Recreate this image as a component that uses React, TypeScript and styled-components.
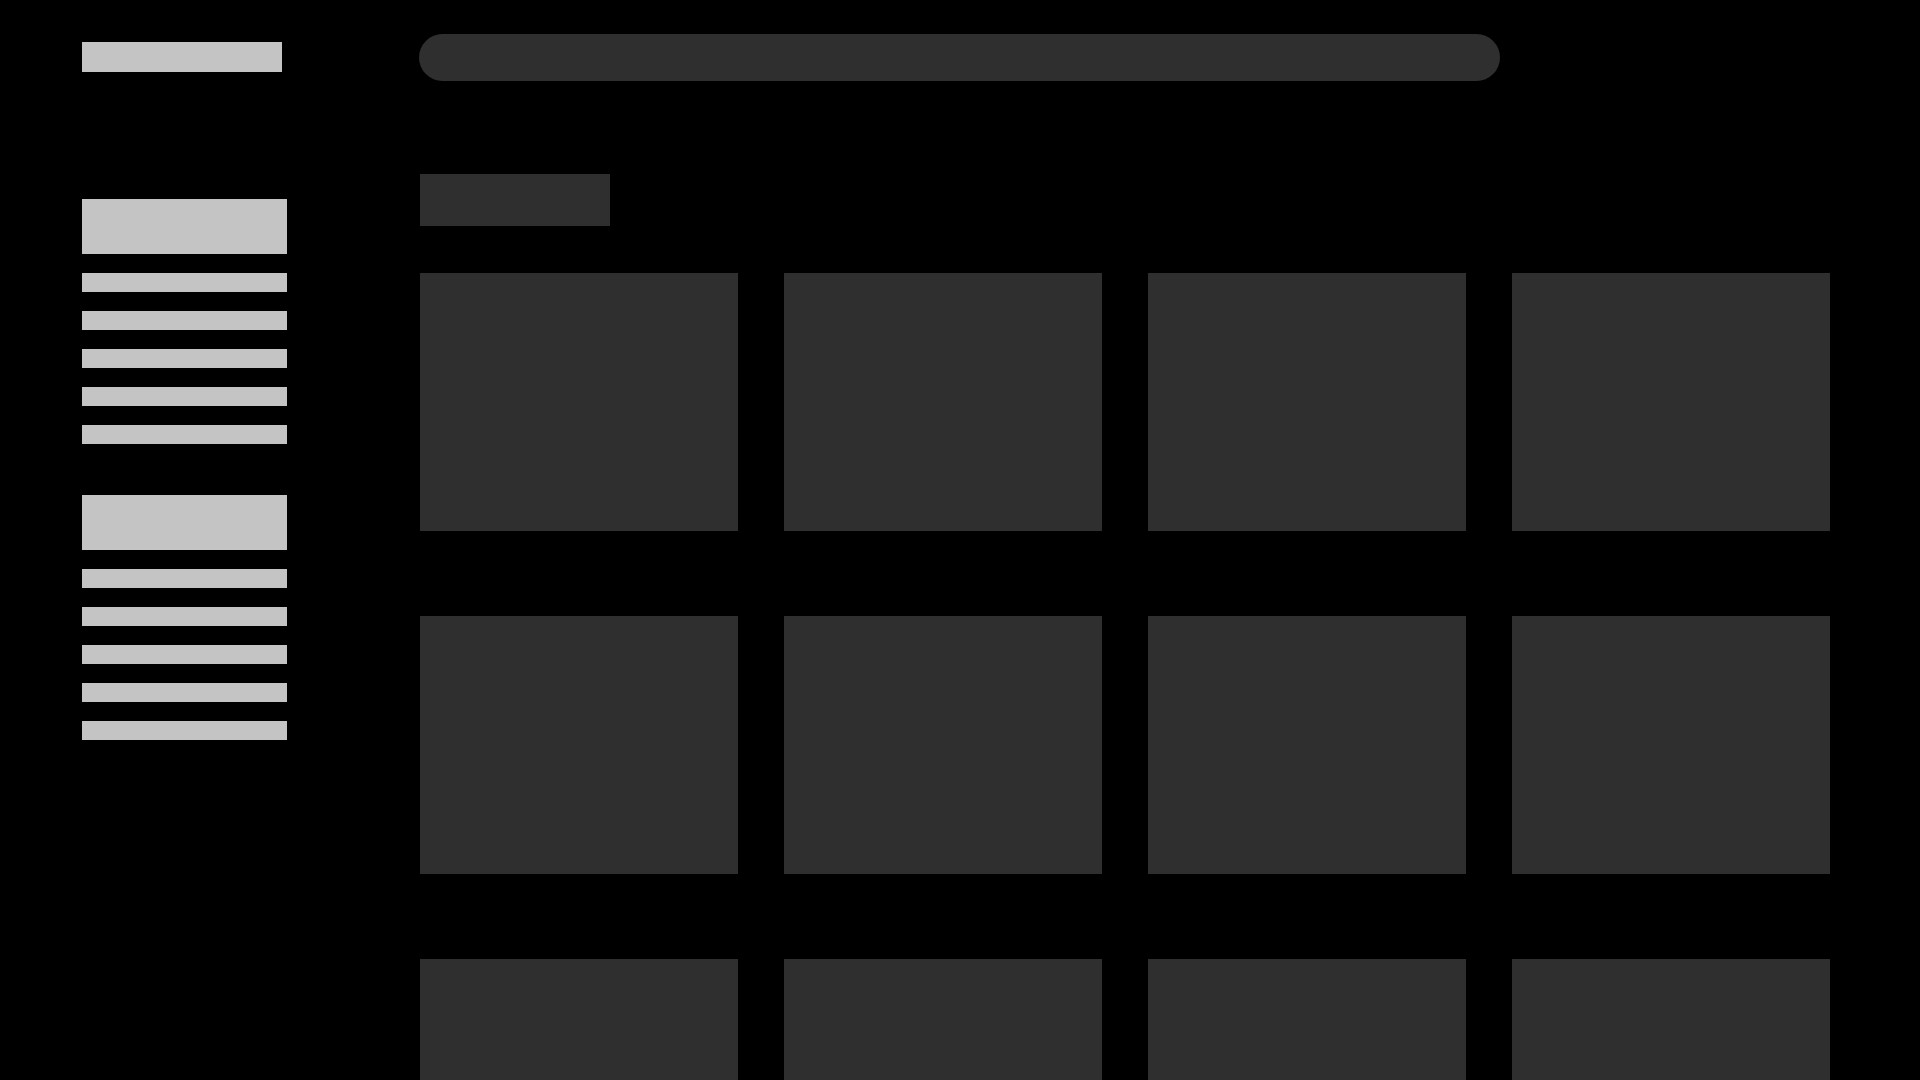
import React from 'react';
import styled, { createGlobalStyle } from 'styled-components';

const GlobalStyle = createGlobalStyle`
  html, body {
    margin: 0;
    padding: 0;
    background: #000;
    font-family: "Liberation Sans", Arial, sans-serif;
  }
`;

const SECTIONS = [5, 5];
const CARD_COUNT = 12;

const Page = styled.div`
  display: grid;
  grid-template-columns: 419px 1fr;
  min-height: 100vh;
  background: #000;
`;

const Sidebar = styled.aside`
  display: flex;
  flex-direction: column;
  padding: 42px 0 0 82px;
`;

const LogoBar = styled.div`
  width: 200px;
  height: 30px;
  background: #c4c4c4;
  margin-bottom: 127px;
`;

const NavGroups = styled.nav`
  display: flex;
  flex-direction: column;
  gap: 51px;
`;

const NavGroup = styled.div`
  display: flex;
  flex-direction: column;
  gap: 19px;
  width: 205px;
`;

const GroupTitle = styled.div`
  height: 55px;
  background: #c4c4c4;
`;

const NavItem = styled.div`
  height: 19px;
  background: #c4c4c4;
`;

const Main = styled.main`
  display: flex;
  flex-direction: column;
  padding-top: 34px;
`;

const SearchBar = styled.div`
  width: 1081px;
  height: 47px;
  border-radius: 24px;
  background: #2f2f2f;
  margin-bottom: 93px;
`;

const Content = styled.section`
  display: flex;
  flex-direction: column;
  gap: 47px;
  padding-left: 1px;
`;

const Heading = styled.div`
  width: 190px;
  height: 52px;
  background: #2f2f2f;
`;

const CardGrid = styled.div`
  display: grid;
  grid-template-columns: repeat(4, 318px);
  column-gap: 46px;
  row-gap: 85px;
`;

const Card = styled.div`
  height: 258px;
  background: #2f2f2f;
`;

function Navigation() {
  return (
    <NavGroups>
      {SECTIONS.map((count, i) => (
        <NavGroup key={i}>
          <GroupTitle />
          {Array.from({ length: count }).map((_, j) => (
            <NavItem key={j} />
          ))}
        </NavGroup>
      ))}
    </NavGroups>
  );
}

export default function App() {
  return (
    <>
      <GlobalStyle />
      <Page>
        <Sidebar>
          <LogoBar />
          <Navigation />
        </Sidebar>
        <Main>
          <SearchBar />
          <Content>
            <Heading />
            <CardGrid>
              {Array.from({ length: CARD_COUNT }).map((_, i) => (
                <Card key={i} />
              ))}
            </CardGrid>
          </Content>
        </Main>
      </Page>
    </>
  );
}
